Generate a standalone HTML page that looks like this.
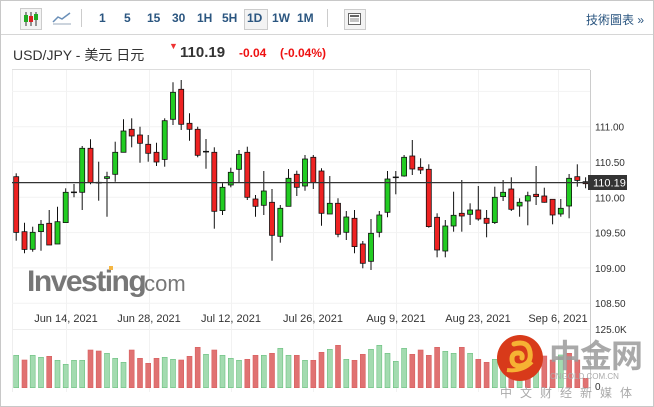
<!DOCTYPE html>
<html><head><meta charset="utf-8"><style>
body{margin:0;width:654px;height:407px;overflow:hidden;background:#fff;font-family:"Liberation Sans","Noto Sans CJK SC",sans-serif}
#wrap{position:absolute;left:0;top:0;width:652px;height:405px;border:1px solid #c8c8c8}
.tb{position:absolute;top:0;left:0;width:652px;height:33px;border-bottom:1px solid #d6d6d6}
.tb span{position:absolute;top:10px;font-size:12px;font-weight:bold;color:#2b5680}
</style></head><body>
<div id="wrap">
<div class="tb">
 <div style="position:absolute;left:19px;top:7px;width:20px;height:20px;border:1px solid #ccc;background:#f3f3f3"></div>
 <svg style="position:absolute;left:20px;top:8px" width="20" height="20"><line x1="5" y1="3" x2="5" y2="17" stroke="#333"/><rect x="3" y="6" width="4" height="7" fill="#2a2"/><line x1="10" y1="3" x2="10" y2="17" stroke="#333"/><rect x="8" y="7" width="4" height="6" fill="#d22"/><line x1="15" y1="3" x2="15" y2="17" stroke="#333"/><rect x="13" y="5" width="4" height="6" fill="#2a2"/></svg>
 <svg style="position:absolute;left:51px;top:10px" width="20" height="14"><path d="M1 11 L6 6 L10 8 L18 2" stroke="#6a8fb8" fill="none" stroke-width="1.5"/><path d="M1 13 L19 13" stroke="#9ab" /></svg>
 <div style="position:absolute;left:80px;top:8px;width:1px;height:18px;background:#ccc"></div>
 <span style="left:98px">1</span><span style="left:123px">5</span><span style="left:146px">15</span><span style="left:171px">30</span><span style="left:196px">1H</span><span style="left:221px">5H</span>
 <div style="position:absolute;left:243px;top:8px;width:22px;height:19px;border:1px solid #ccc;background:#f3f3f3"></div>
 <span style="left:246px">1D</span><span style="left:271px">1W</span><span style="left:296px">1M</span>
 <div style="position:absolute;left:326px;top:8px;width:1px;height:18px;background:#ccc"></div>
 <div style="position:absolute;left:343px;top:8px;width:20px;height:19px;border:1px solid #ccc;background:#f3f3f3"></div>
 <svg style="position:absolute;left:347px;top:12px" width="13" height="12"><rect x=".5" y=".5" width="12" height="11" fill="#fff" stroke="#666"/><rect x="2" y="2" width="9" height="2" fill="#666"/><line x1="2" y1="6" x2="11" y2="6" stroke="#888"/><line x1="2" y1="8" x2="11" y2="8" stroke="#888"/></svg>
 <span style="left:585px;font-weight:normal;font-size:12px">技術圖表 »</span>
</div>
<div style="position:absolute;left:12px;top:44px;font-size:14px;color:#333">USD/JPY - 美元 日元</div>
<div style="position:absolute;left:168px;top:40px;color:#e33;font-size:9px">&#9660;</div>
<div style="position:absolute;left:179px;top:43px;font-size:15px;font-weight:bold;color:#333">110.19</div>
<div style="position:absolute;left:238px;top:45px;font-size:12px;font-weight:bold;color:#e11">-0.04</div>
<div style="position:absolute;left:279px;top:45px;font-size:12px;font-weight:bold;color:#e11">(-0.04%)</div>
<svg id="c" style="position:absolute;left:-1px;top:-1px" width="654" height="407"></svg>
</div>
<script>
var s='';
s+='<line x1="12" y1="69.5" x2="590" y2="69.5" stroke="#ddd"/>';
s+='<line x1="12.5" y1="70" x2="12.5" y2="392" stroke="#eee"/>';
s+='<line x1="590.5" y1="70" x2="590.5" y2="392" stroke="#ccc"/>';
var py=function(p){return 126.7+(111-p)*70.6};
[111.5,111,110.5,110,109.5,109,108.5].forEach(function(p){s+='<line x1="12" x2="590" y1="'+py(p).toFixed(1)+'" y2="'+py(p).toFixed(1)+'" stroke="#f2f2f2"/>';});
s+='<line x1="12" x2="590" y1="329.5" y2="329.5" stroke="#eee"/>';
var dx=[66,149,231,313,396,478,558],dl=['Jun 14, 2021','Jun 28, 2021','Jul 12, 2021','Jul 26, 2021','Aug 9, 2021','Aug 23, 2021','Sep 6, 2021'];
dx.forEach(function(x,i){s+='<line x1="'+x+'.5" x2="'+x+'.5" y1="70" y2="392" stroke="#f2f2f2"/>';s+='<text x="'+x+'" y="322" font-size="11" fill="#333" text-anchor="middle">'+dl[i]+'</text>';});
s+='<text x="27" y="291" font-size="30" font-weight="bold" fill="#777" letter-spacing="-1.5">Investing</text><text x="138" y="291" font-size="22" fill="#777">.com</text><rect x="109" y="266" width="4" height="4" fill="#f5b642"/>';
var C=[['r',320,487,310,512],['r',485,538,458,550],['g',487,538,470,545],['g',463,485,450,542],['r',460,525,420,525],['g',455,522,410,522],['g',367,458,355,458],['d',367,367,342,382],['g',235,367,228,420],['r',235,338,208,343],['d',338,338,275,392],['g',320,325,305,440],['g',247,313,215,335],['g',183,247,148,247],['r',178,198,145,232],['r',195,220,170,278],['r',223,250,195,275],['r',247,276,218,288],['g',152,268,145,290],['g',67,148,37,165],['r',58,163,30,180],['r',160,178,130,212],['r',178,256,170,262],['d',245,245,207,296],['r',247,424,232,476],['g',352,422,340,435],['g',307,345,293,352],['g',253,298,240,338],['r',247,382,230,390],['r',387,409,375,440],['g',363,406,303,435],['r',397,496,357,572],['g',415,499,405,518],['g',325,409,297,409],['r',313,352,302,378],['g',267,348,255,362],['r',262,338,255,357],['r',303,430,295,467],['g',400,432,318,432],['r',400,493,385,502],['g',441,487,423,510],['r',445,530,420,550],['r',522,580,513,595],['g',490,574,447,600],['g',435,487,423,502],['g',327,427,303,442],['d',322,322,303,373],['g',262,318,255,320],['r',258,297,210,315],['r',292,300,265,312],['r',298,470,283,473],['r',442,540,430,562],['g',468,543,450,562],['g',436,468,365,485],['r',430,438,330,485],['g',420,433,400,465],['r',420,447,348,452],['r',445,460,420,502],['g',382,458,350,462],['g',367,380,330,393],['r',357,418,322,423],['g',397,408,385,440],['g',377,393,365,466],['r',373,380,288,405],['r',378,397,353,398],['r',388,435,388,463],['g',415,432,387,440],['g',325,408,312,445],['r',320,331,283,350],['r',335,341,322,355]];
var n=C.length,st=(585.6-16.2)/(n-1);
C.forEach(function(c,i){var x=16.2+i*st,Y=function(v){return 70+v/3};
var t=Y(Math.min(c[1],c[2])),b=Y(Math.max(c[1],c[2]));
s+='<line x1="'+x.toFixed(1)+'" x2="'+x.toFixed(1)+'" y1="'+Y(c[3]).toFixed(1)+'" y2="'+Y(c[4]).toFixed(1)+'" stroke="#111"/>';
if(c[0]=='d'){s+='<line x1="'+(x-3)+'" x2="'+(x+3)+'" y1="'+t+'" y2="'+t+'" stroke="#111" stroke-width="1.5"/>';}
else s+='<rect x="'+(x-2.5).toFixed(1)+'" y="'+t.toFixed(1)+'" width="5" height="'+Math.max(1,b-t).toFixed(1)+'" fill="'+(c[0]=='g'?'#22cc22':'#ee2222')+'" stroke="#111" stroke-width="0.8"/>';});
var V='g286 r300 g286 g292 r289 g301 g313 g301 g301 r270 r273 g280 g295 g307 r270 r295 r310 r295 g292 g298 r300 r289 r262 g283 r270 g286 g295 g301 r298 r286 g286 r280 g265 g286 r286 g301 r301 r277 g268 r256 g298 r301 r283 g268 g256 g280 g304 g265 r283 r270 r286 r262 g274 g280 r262 g280 r298 r307 g298 g280 r290 g300 r280 g290 r288 r300 g285 r280 r300 r355'.split(' ');
V.forEach(function(v,i){var x=16.2+i*st,t=260+(+v.slice(1))/3,g=v[0]=='g';
s+='<rect x="'+(x-2.5).toFixed(1)+'" y="'+t.toFixed(1)+'" width="5" height="'+(387.7-t).toFixed(1)+'" fill="'+(g?'#a3dbb0':'#e07272')+'" stroke="'+(g?'#6cc080':'#d86060')+'" stroke-width="0.6"/>';});
s+='<line x1="12" x2="590" y1="182.6" y2="182.6" stroke="#333" stroke-width="1.2"/>';
[[111,'111.00'],[110.5,'110.50'],[110,'110.00'],[109.5,'109.50'],[109,'109.00'],[108.5,'108.50']].forEach(function(a){s+='<text x="595" y="'+(py(a[0])+4).toFixed(1)+'" font-size="10" fill="#333">'+a[1]+'</text>';});
s+='<rect x="588" y="175" width="39" height="15" fill="#333"/><text x="593" y="186.5" font-size="11" fill="#fff">110.19</text>';
s+='<text x="595" y="333" font-size="10" fill="#333">125.0K</text><text x="595" y="390" font-size="10" fill="#333">0</text>';
s+='<circle cx="520" cy="358" r="23" fill="#d83a1a"/><path d="M514 344 q14 -4 16 8 q2 12 -10 14 q-8 0 -8 -7 q0 -6 6 -6 q5 0 4 5" stroke="#f6b233" stroke-width="5" fill="none" stroke-linecap="round"/><path d="M507 370 q15 2 25 -8" stroke="#f6b233" stroke-width="4" fill="none"/>';
s+='<text x="549" y="367" font-size="32" font-weight="bold" fill="#9a9a9a" fill-opacity="0.85" letter-spacing="-1">中金网</text>';
s+='<text x="550" y="379" font-size="8" fill="#aaa">CNGOLD.COM.CN</text>';
s+='<text x="500" y="397" font-size="12" fill="#aaa" letter-spacing="8">中文财经新媒体</text>';
document.getElementById('c').innerHTML=s;
</script>
</body></html>
